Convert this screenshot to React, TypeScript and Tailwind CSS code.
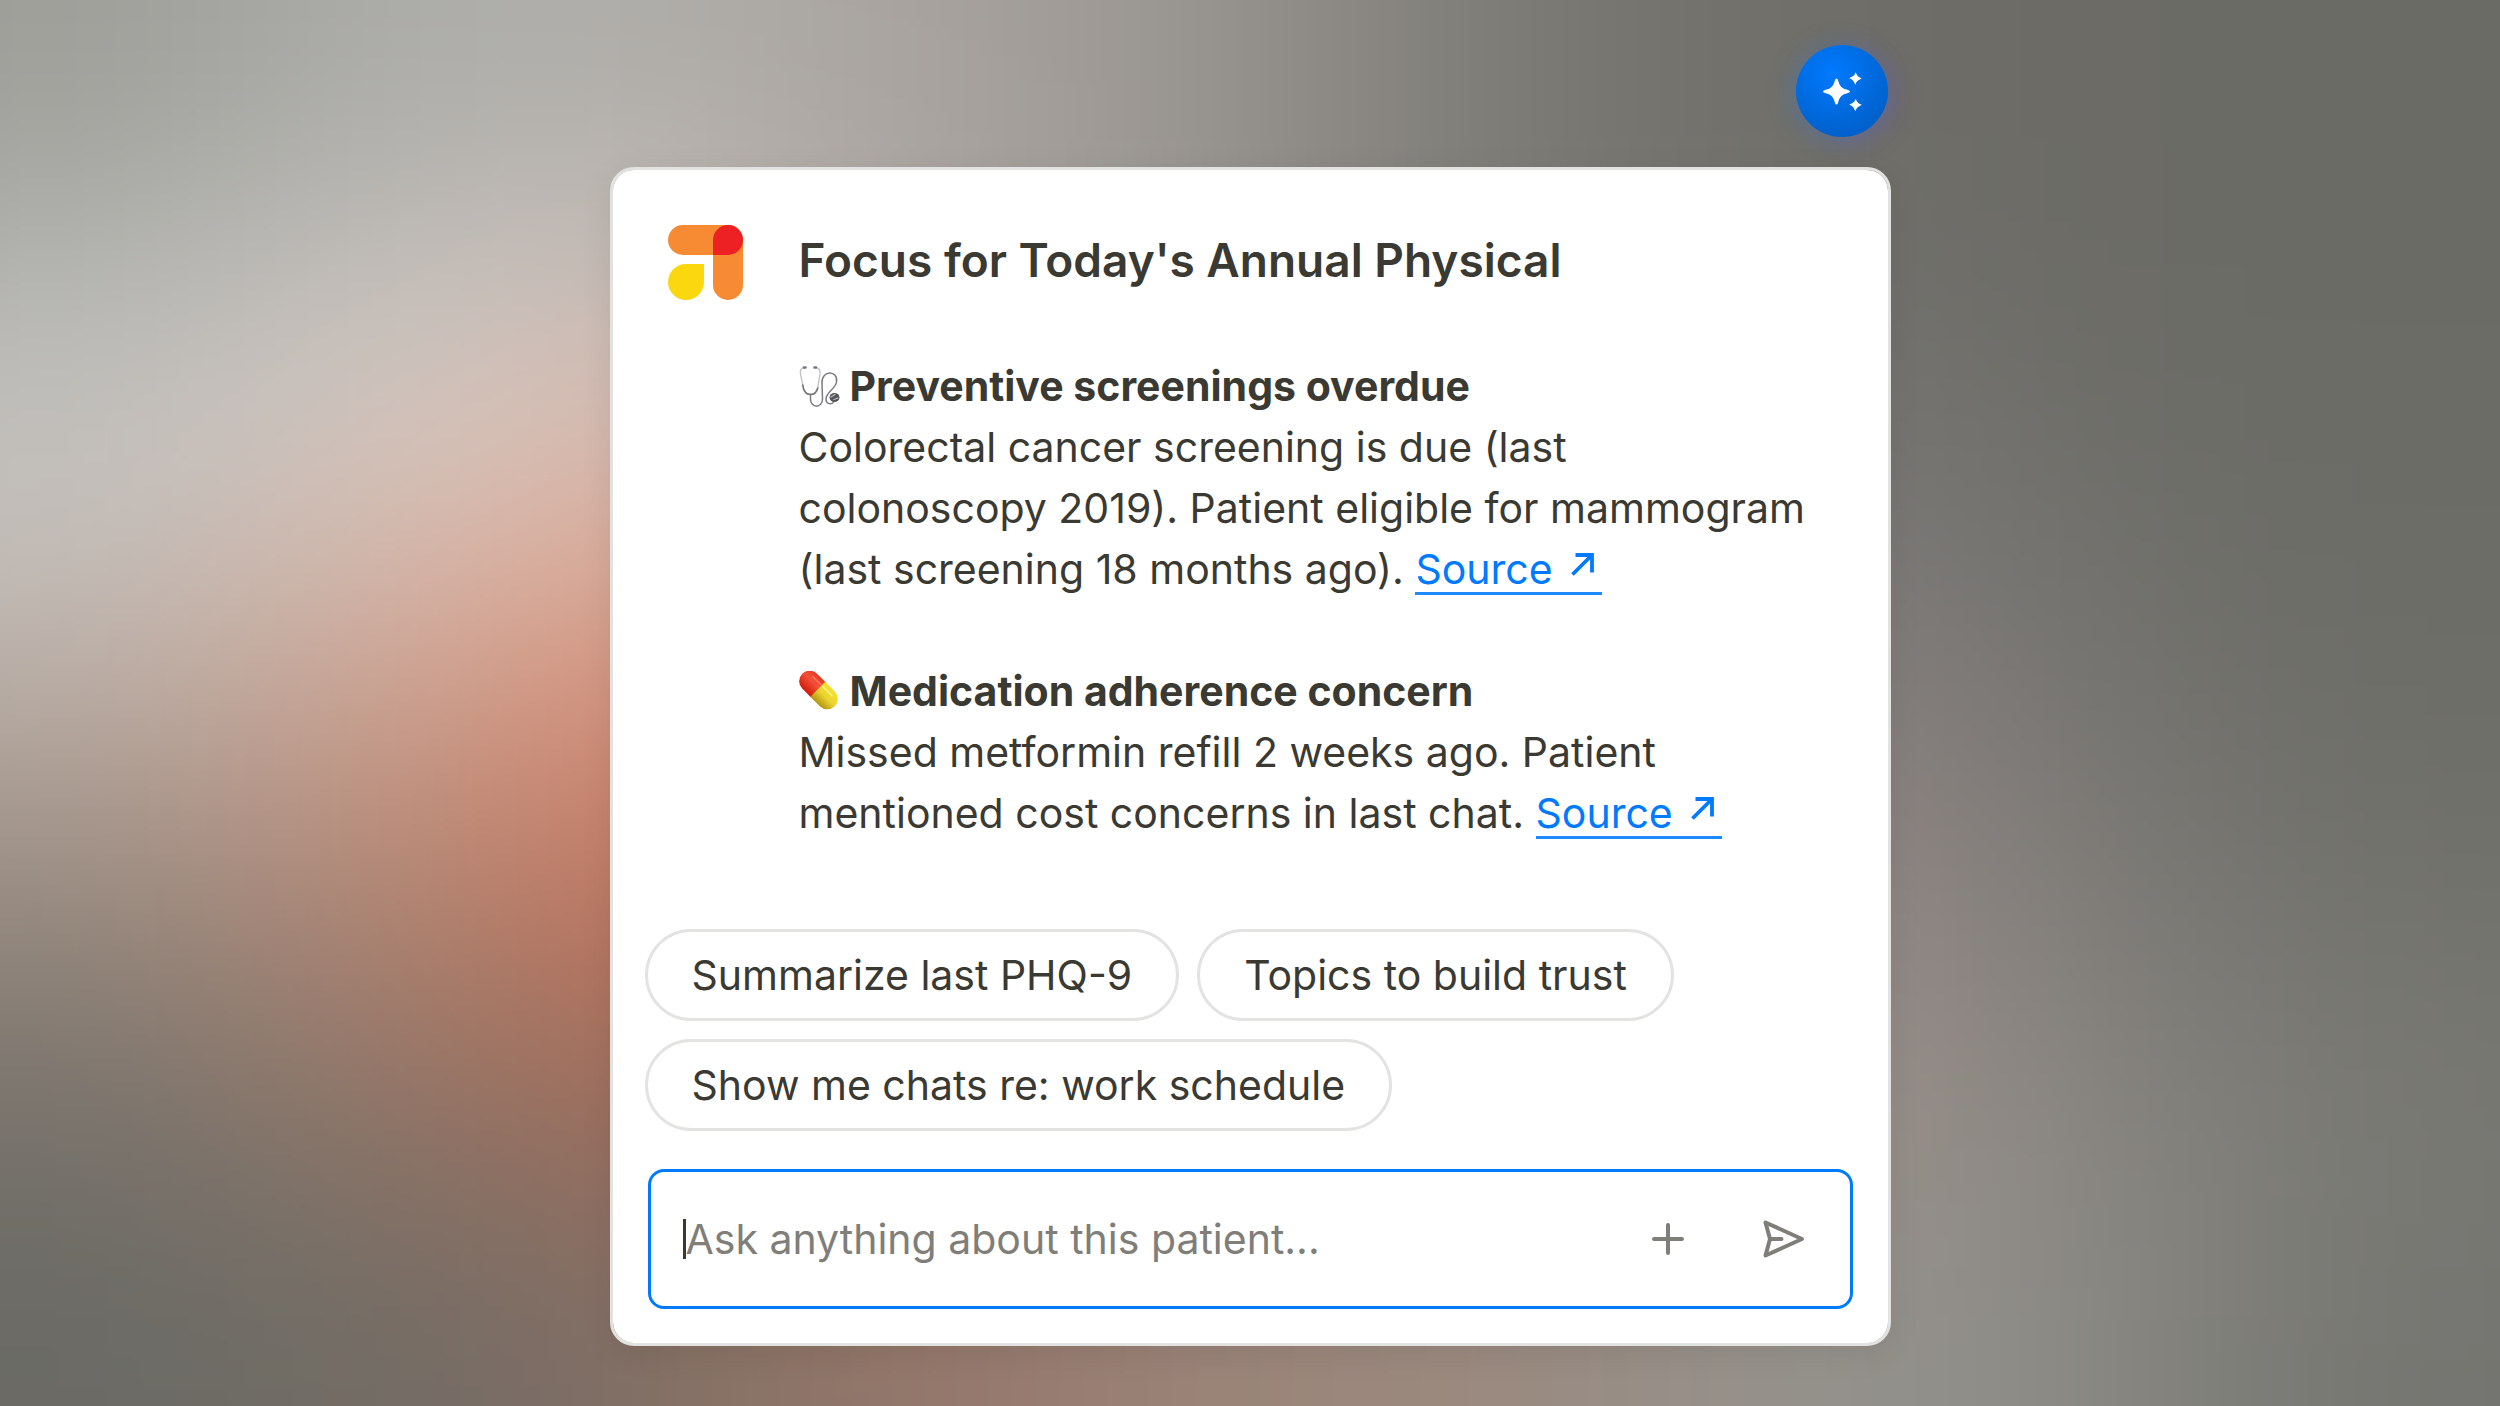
import type { ReactNode } from 'react';

/**
 * Backdrop colours, sampled on a coarse grid and melted together
 * with a gaussian blur. Rows run top to bottom, cells left to right.
 */
const BACKDROP = [
  ['#9d9e98', '#a6a7a3', '#adada9', '#b0aeaa', '#aba7a3', '#a5a09c', '#9b9793', '#8c8984', '#7b7a75', '#72716c', '#6e6d68', '#6c6b66', '#6b6b66', '#6b6b66'],
  ['#b2b3af', '#bcbbb7', '#c4bfbb', '#c8bfba', '#b8b0ab', '#aaa39f', '#9b9793', '#8c8984', '#7b7a75', '#73726d', '#6f6f6a', '#6c6b66', '#6b6b66', '#6b6b66'],
  ['#c4c3c0', '#cec6c2', '#d8c7be', '#dcbdb1', '#c8aca2', '#b0a39d', '#9b9793', '#8c8984', '#807d79', '#7a7775', '#777573', '#6f6f6a', '#6c6c67', '#6c6c67'],
  ['#c1b8b2', '#cab2a6', '#d6ab9c', '#dc9f89', '#cc9886', '#b0978e', '#9b9793', '#8c8984', '#838080', '#817e7e', '#7f7c7b', '#747370', '#6e6e69', '#6d6d68'],
  ['#a99b91', '#b9988a', '#c48e79', '#cc806a', '#c47c66', '#a98476', '#9b8a83', '#938984', '#8e8582', '#8c8381', '#8c8280', '#7d7a77', '#72726d', '#6f6f6a'],
  ['#8b8177', '#9b8073', '#aa7b68', '#b5705a', '#b26e5a', '#a47767', '#9a8278', '#978880', '#968a84', '#948a84', '#958b87', '#84817d', '#797873', '#757570'],
  ['#74706a', '#81746a', '#8d7265', '#966c5d', '#966f60', '#98766a', '#9a8075', '#9b877d', '#9b8a82', '#9a8d88', '#9a908b', '#8c8883', '#807f7a', '#797974'],
  ['#6a6a65', '#6e6c65', '#756c65', '#7f6e64', '#8e7568', '#96786d', '#9a8277', '#9b877b', '#9b8a80', '#96908a', '#93928c', '#8c8b86', '#7e7e79', '#747570'],
];

const SUGGESTIONS = [
  'Summarize last PHQ-9',
  'Topics to build trust',
  'Show me chats re: work schedule',
];

export default function App() {
  return (
    <main className="relative isolate min-h-screen overflow-hidden bg-[#6b6b66] px-8 pt-[45px] pb-[60px] font-['Inter',sans-serif] text-[#3a3932]">
      <Backdrop />

      <div className="mx-auto flex w-full max-w-[1281px] flex-col gap-[30px]">
        <button
          type="button"
          aria-label="Open assistant"
          className="mr-[3px] flex size-[92px] items-center justify-center self-end rounded-full bg-[radial-gradient(circle_at_40%_30%,#007aff_0%,#005fc8_80%)] shadow-[-4px_2px_24px_rgba(60,130,190,0.4),8px_4px_24px_rgba(110,80,170,0.4)]"
        >
          <SparklesIcon />
        </button>

        <section className="rounded-[24px] border-[3px] border-[#e2e2e1] bg-white bg-clip-padding pt-[55px] pb-[34px] shadow-[0_8px_32px_rgba(0,0,0,0.08)]">
          <div className="flex items-start gap-[56px] pr-[75px] pl-[55px]">
            <Logo />
            <div className="min-w-0 flex-1">
              <h1 className="text-[46px] leading-[71px] font-semibold">
                Focus for Today's Annual Physical
              </h1>

              <div className="mt-[60px] flex flex-col gap-[61px] text-[41px] leading-[61px]">
                <Insight icon={<StethoscopeIcon />} title="Preventive screenings overdue">
                  Colorectal cancer screening is due (last colonoscopy 2019). Patient eligible for
                  mammogram (last screening 18 months ago).
                </Insight>
                <Insight icon={<PillIcon />} title="Medication adherence concern">
                  Missed metformin refill 2 weeks ago. Patient mentioned cost concerns in last chat.
                </Insight>
              </div>
            </div>
          </div>

          <div className="mt-[85px] flex flex-wrap gap-[18px] px-8">
            {SUGGESTIONS.map(s => (
              <button
                key={s}
                type="button"
                className="h-[92px] rounded-full border-[3px] border-[#e3e3e2] px-[44px] text-[41px] leading-[61px]"
              >
                {s}
              </button>
            ))}
          </div>

          <form
            className="mx-[35px] mt-[38px] flex h-[140px] items-center rounded-[16px] border-[3px] border-[#007aff] pr-[44px] pl-8"
            onSubmit={e => e.preventDefault()}
          >
            <span aria-hidden="true" className="h-10 w-[3px] bg-[#3a3932]" />
            <input
              type="text"
              aria-label="Ask anything about this patient"
              placeholder="Ask anything about this patient..."
              className="min-w-0 flex-1 bg-transparent text-[41px] leading-[61px] caret-transparent outline-none placeholder:text-[#7f7e79]"
            />
            <div className="flex items-center gap-[72px] text-[#7f7e79]">
              <button type="button" aria-label="Add attachment">
                <PlusIcon />
              </button>
              <button type="submit" aria-label="Send">
                <SendIcon />
              </button>
            </div>
          </form>
        </section>
      </div>
    </main>
  );
}

/* -------------------------------- BITS -------------------------------- */

function Insight({
  icon,
  title,
  children,
}: {
  icon: ReactNode;
  title: string;
  children: ReactNode;
}) {
  return (
    <article>
      <h2 className="flex items-center gap-[10px] font-bold">
        {icon}
        {title}
      </h2>
      <p>
        {children}{' '}
        <a
          href="#source"
          className="inline-block border-b-[3px] border-[#1f8aff] leading-[45px] whitespace-nowrap text-[#007aff]"
        >
          Source
          <ArrowIcon />
        </a>
      </p>
    </article>
  );
}

function Backdrop() {
  return (
    <svg
      aria-hidden="true"
      className="absolute inset-0 -z-10 h-full w-full"
      viewBox="0 0 1400 800"
      preserveAspectRatio="none"
    >
      <filter id="melt" x="-20%" y="-20%" width="140%" height="140%" colorInterpolationFilters="sRGB">
        <feGaussianBlur stdDeviation="60" />
      </filter>
      <g filter="url(#melt)">
        {BACKDROP.map((row, y) =>
          row.map((fill, x) => {
            // Edge cells spill past the frame so the blur never fades out
            const left = x === 0 ? -300 : x * 100;
            const right = x === row.length - 1 ? 1700 : x * 100 + 101;
            const top = y === 0 ? -300 : y * 100;
            const bottom = y === BACKDROP.length - 1 ? 1100 : y * 100 + 101;
            return (
              <rect
                key={`${x}-${y}`}
                x={left}
                y={top}
                width={right - left}
                height={bottom - top}
                fill={fill}
              />
            );
          })
        )}
      </g>
    </svg>
  );
}

function Logo() {
  return (
    <svg aria-hidden="true" className="size-[75px] shrink-0" viewBox="0 0 75 75">
      <rect width="75" height="30" rx="15" fill="#f68b33" />
      <rect x="45" width="30" height="75" rx="15" fill="#f68b33" />
      <path d="M45 30V15a15 15 0 1 1 15 15Z" fill="#ed2024" />
      <path d="M36 39v18a18 18 0 1 1-18-18Z" fill="#fbd70f" />
    </svg>
  );
}

function SparklesIcon() {
  return (
    <svg aria-hidden="true" className="size-[40px]" viewBox="0 0 40 40" fill="#fff">
      <path d="M14.500 7.500Q15.500 7.500 16 9C17.700 15.500 19.500 17.300 26 19Q28 19.600 28 20.500Q28 21.400 26 22C19.500 23.700 17.700 25.500 16 32Q15.500 33.500 14.500 33.500Q13.500 33.500 13 32C11.300 25.500 9.500 23.700 3 22Q1 21.400 1 20.500Q1 19.600 3 19C9.500 17.300 11.300 15.500 13 9Q13.500 7.500 14.500 7.500Z" />
      <path d="M33.500 1.500C34.500 1.500 34.500 6 39.500 7C39.500 8.500 34.500 8.700 33.500 13.500C32.500 13.500 32.500 8.700 27.500 7.500C27.500 6 32.500 6 33.500 1.500Z" />
      <path d="M33.500 28C34.500 28 34.500 32.500 39.500 33.500C39.500 35 34.500 35.200 33.500 40C32.500 40 32.500 35.200 27.500 34C27.500 32.500 32.500 32.500 33.500 28Z" />
    </svg>
  );
}

function StethoscopeIcon() {
  return (
    <svg aria-hidden="true" className="size-[41px]" viewBox="0 0 41 41" fill="none" strokeLinecap="round">
      <path d="M5.500 1.500C2 2 1 4.500 1.500 8L4 20C5 26 8 28.500 11.500 28.500C15 28.500 18 26 19 20L21 8C21.500 4.500 20 2 16.500 1.500" stroke="#c3c4ca" strokeWidth="1.400" />
      <path d="M3.700 19L4.300 22C5.500 26.500 8 28.500 11.500 28.500C15 28.500 17.700 26.500 18.800 22" stroke="#77787b" strokeWidth="1.600" />
      <path d="M11.500 28.500V33C11.500 42.500 23.500 42.500 23.500 33L23 17C22.500 3.500 39.500 4 37.500 16C36.500 23 27 26 27 33C27 38.500 33 39 35 35.500" stroke="#7b7c7f" strokeWidth="1.500" />
      <path d="M5 1.500h1.500M15.500 1.500H17" stroke="#77787c" strokeWidth="2.600" />
      <ellipse cx="35.500" cy="31.500" rx="5" ry="4.600" fill="#55565d" />
      <path d="M32 31l4-2.500M35 33.500l4-1.500" stroke="#b9bac2" strokeWidth="1.300" />
    </svg>
  );
}

function PillIcon() {
  return (
    <svg aria-hidden="true" className="size-[41px]" viewBox="0 0 41 41">
      <defs>
        <linearGradient id="pill-red" x1="0" y1="0" x2="0" y2="1">
          <stop offset="0" stopColor="#e23a22" />
          <stop offset="0.4" stopColor="#f4513a" />
          <stop offset="1" stopColor="#cf1c08" />
        </linearGradient>
        <linearGradient id="pill-yellow" x1="0" y1="0" x2="0" y2="1">
          <stop offset="0" stopColor="#f5e02c" />
          <stop offset="0.5" stopColor="#ecd431" />
          <stop offset="1" stopColor="#b39410" />
        </linearGradient>
      </defs>
      <g transform="rotate(45 19.500 19)">
        <path d="M19.500 8.500H7A10.500 10.500 0 0 0 7 29.500H19.500Z" fill="url(#pill-red)" />
        <path d="M18.500 8.500H32A10.500 10.500 0 0 1 32 29.500H18.500Z" fill="url(#pill-yellow)" />
        <path d="M6 13.500H17" stroke="#f9705c" strokeWidth="1.800" strokeLinecap="round" />
        <path d="M20 13.500H33" stroke="#f8f07c" strokeWidth="1.800" strokeLinecap="round" />
      </g>
    </svg>
  );
}

function ArrowIcon() {
  return (
    <svg
      aria-hidden="true"
      className="mr-2 ml-[18px] inline-block size-[23px] align-[8px]"
      viewBox="0 0 23 23"
      fill="none"
      stroke="currentColor"
      strokeWidth="3.800"
    >
      <path d="M4.500 2H21V19.500M21 2L1.500 21.500" />
    </svg>
  );
}

function PlusIcon() {
  return (
    <svg aria-hidden="true" className="size-[40px]" viewBox="0 0 40 40" fill="none" stroke="currentColor" strokeWidth="4" strokeLinecap="round">
      <path d="M20 6V34M6 20H34" />
    </svg>
  );
}

function SendIcon() {
  return (
    <svg aria-hidden="true" className="size-[46px]" viewBox="0 0 46 46" fill="none" stroke="currentColor" strokeWidth="4" strokeLinecap="round" strokeLinejoin="round">
      <path d="M5.500 6.500L42 23L5.500 39.500L10 23ZM10 23H21.500" />
    </svg>
  );
}
